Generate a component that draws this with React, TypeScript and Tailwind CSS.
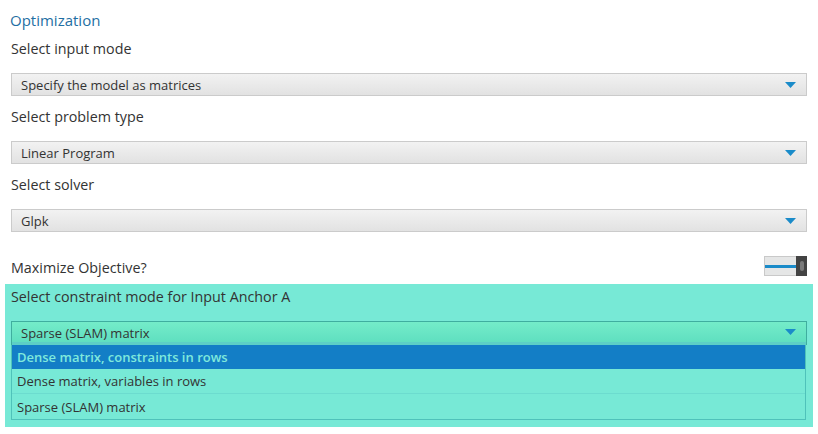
import React from "react";

const font = { fontFamily: '"Open Sans", "Noto Sans", sans-serif' };

function Arrow() {
  return (
    <svg width="11" height="6" viewBox="0 0 11 6" className="block">
      <polygon points="0,0 11,0 5.5,6" fill="#1a8bc9" />
    </svg>
  );
}

function Select({ text }: { text: string }) {
  return (
    <div className="mt-[12px] h-[23px] flex items-center justify-between border border-[#cbcbcb] bg-gradient-to-b from-[#f2f2f2] to-[#e2e2e2] pl-[9px] pr-[10px]">
      <span className="text-[13px] text-[#333] leading-none pt-[2px]">{text}</span>
      <Arrow />
    </div>
  );
}

function Label({ text, mt }: { text: string; mt: string }) {
  return (
    <div className={`${mt} h-[24px] flex items-center text-[14.3px] text-[#333]`}>{text}</div>
  );
}

export default function App() {
  return (
    <div className="w-[818px] h-[434px] bg-white overflow-hidden" style={font}>
      <div className="px-[11px] pt-[8px]">
        <div className="h-[24px] flex items-center -ml-[1px] text-[15px] text-[#1f6fa3]">Optimization</div>
        <Label text="Select input mode" mt="mt-[5px]" />
        <Select text="Specify the model as matrices" />
        <Label text="Select problem type" mt="mt-[9px]" />
        <Select text="Linear Program" />
        <Label text="Select solver" mt="mt-[9px]" />
        <Select text="Glpk" />
        <div className="mt-[24px] h-[20px] flex items-center justify-between">
          <span className="text-[14.3px] text-[#333] mt-[4px]">Maximize Objective?</span>
          <div className="flex items-center">
            <div className="w-[36px] h-[20px] bg-[#e5e6e6] border border-[#c9c9c9] flex items-center">
              <div className="w-full h-[3px] bg-[#1a8bc9]" />
            </div>
            <div className="-ml-[4px] w-[11px] h-[20px] bg-[#434343] flex items-center justify-center">
              <div className="w-[4px] h-[10px] rounded-full bg-[#7a7a7a]" />
            </div>
          </div>
        </div>
      </div>
      <div className="mt-[8px] mx-[5px] bg-[#77e9d6] px-[6px] pt-[1px] pb-[7px]">
        <Label text="Select constraint mode for Input Anchor A" mt="mt-0" />
        <div className="mt-[12px] h-[24px] flex flex-col border border-[#3fae9f] border-b-0">
          <div className="flex-1 flex items-center justify-between bg-gradient-to-b from-[#74ecc9] to-[#5fdfc0] pl-[9px] pr-[10px]">
            <span className="text-[13px] text-[#333] leading-none pt-[2px]">Sparse (SLAM) matrix</span>
            <Arrow />
          </div>
          <div className="h-[3px] bg-[#5ccfc6]" />
        </div>
        <div className="border border-t-0 border-[#4fc2ba] mr-[1px]">
          <div className="h-[24px] bg-[#137ec6] flex items-center pl-[5px] pt-[2px] text-[13px] font-semibold text-[#7fe9dc]">
            Dense matrix, constraints in rows
          </div>
          <div className="h-[25px] flex items-center pl-[5px] pt-[2px] text-[13px] text-[#333] border-b border-[#6cdccf]">
            Dense matrix, variables in rows
          </div>
          <div className="h-[25px] flex items-center pl-[5px] pt-[2px] text-[13px] text-[#333]">
            Sparse (SLAM) matrix
          </div>
        </div>
      </div>
    </div>
  );
}
